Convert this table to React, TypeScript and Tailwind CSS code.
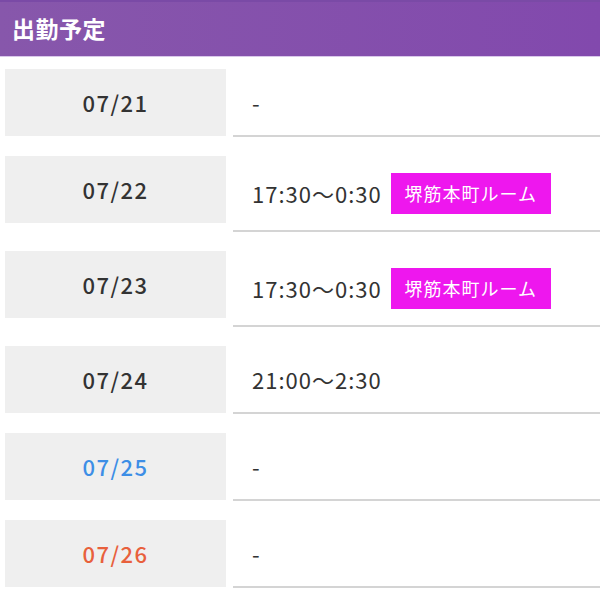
import React from "react";

type Row = { date: string; color: string; time: string; badge?: boolean };

const rows: Row[] = [
  { date: "07/21", color: "text-[#333333]", time: "-" },
  { date: "07/22", color: "text-[#333333]", time: "17:30〜0:30", badge: true },
  { date: "07/23", color: "text-[#333333]", time: "17:30〜0:30", badge: true },
  { date: "07/24", color: "text-[#333333]", time: "21:00〜2:30" },
  { date: "07/25", color: "text-[#3d8ee6]", time: "-" },
  { date: "07/26", color: "text-[#e8603c]", time: "-" },
];

export default function App() {
  return (
    <div
      className="w-[600px] h-[600px] bg-white overflow-hidden"
      style={{ fontFamily: '"Noto Sans CJK JP", "Noto Sans", sans-serif' }}
    >
      <div className="h-[57px] border-t-2 border-[#7a4aa6] bg-gradient-to-r from-[#8757ab] to-[#8249ad] flex items-center pl-[12px] pb-[2px] border-b border-b-[#d9c8ea]">
        <span className="text-white font-bold text-[23px] tracking-[0.5px] leading-none">出勤予定</span>
      </div>
      <div className="pt-[12px] pl-[5px]">
        {rows.map((r, i) => (
          <div key={i} className="flex items-start mb-[19px]">
            <div
              className={`w-[221px] h-[67px] shrink-0 bg-[#efefef] flex items-center justify-center text-[22px] tracking-[1.5px] font-medium ${r.color}`}
            >
              {r.date}
            </div>
            <div
              className={`ml-[7px] flex-1 flex items-center border-b-2 border-[#d4d4d4] pl-[19px] ${
                r.badge ? "h-[76px]" : "h-[68px]"
              }`}
            >
              <span className="text-[22px] tracking-[1px] text-[#333333]">{r.time}</span>
              {r.badge && (
                <span className="ml-[9px] w-[160px] h-[41px] bg-[#ee17ee] text-white text-[18px] tracking-[1px] flex items-center justify-center">
                  堺筋本町ルーム
                </span>
              )}
            </div>
          </div>
        ))}
      </div>
    </div>
  );
}
